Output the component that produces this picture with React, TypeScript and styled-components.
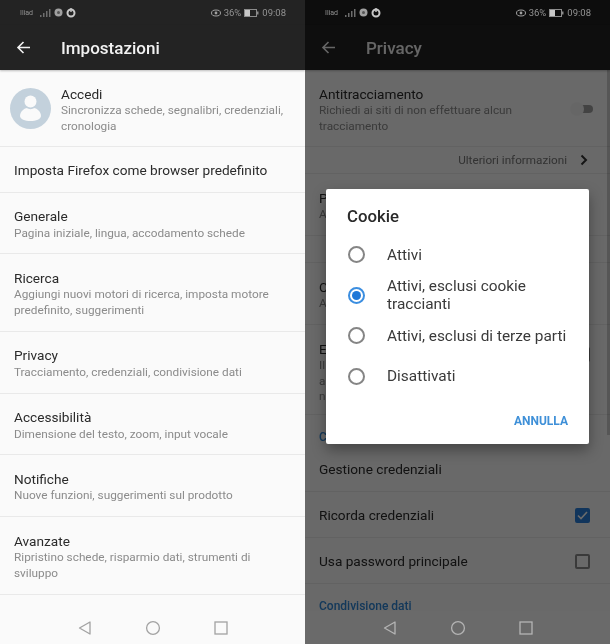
import React from 'react'
import styled, { createGlobalStyle } from 'styled-components'

const GlobalStyle = createGlobalStyle`
  html, body {
    margin: 0;
    padding: 0;
    background: #fafafa;
    font-family: Roboto, "Liberation Sans", sans-serif;
  }
`

const Page = styled.div`
  display: flex;
  width: 610px;
  height: 644px;
  overflow: hidden;
  filter: blur(0.6px);
`

const Phone = styled.div`
  position: relative;
  display: flex;
  flex-direction: column;
  width: 305px;
  height: 644px;
  overflow: hidden;
  background: #fafafa;
`

const StatusBar = styled.div<{ $dark?: boolean }>`
  display: flex;
  align-items: center;
  justify-content: space-between;
  height: 25px;
  flex: none;
  padding: 0 19px 0 20px;
  box-sizing: border-box;
  background: ${({ $dark }) => ($dark ? '#0d0d0d' : '#232323')};
  color: #929292;
  font-size: 9.5px;
`

const StatusGroup = styled.div`
  display: flex;
  align-items: center;
  gap: 3px;
`

const Carrier = styled.span`
  font-size: 7px;
  margin-right: 4px;
`

const Toolbar = styled.div`
  display: flex;
  align-items: center;
  height: 45px;
  flex: none;
  padding-left: 16px;
  background: #232323;
  color: #f2f2f2;
  font-size: 17px;
  font-weight: 500;
  box-shadow: 0 1px 2px rgba(0, 0, 0, 0.25);
  position: relative;
`

const BackIcon = styled.svg`
  width: 15px;
  height: 15px;
  margin-right: 30px;
`

const Content = styled.div`
  flex: 1;
  overflow: hidden;
`

const Row = styled.div`
  display: flex;
  align-items: flex-start;
  padding: 15.5px 14px 12.35px;
  border-bottom: 1px solid #e9e9e9;
`

const SingleRow = styled(Row)`
  align-items: center;
  padding: 15px 14px 12.5px;
`

const AccountRow = styled(Row)`
  padding-left: 10px;
  padding-bottom: 11.5px;
`

const TallRow = styled(Row)`
  padding-bottom: 9.85px;
`

const CheckRow = styled(SingleRow)`
  padding-right: 20px;
`

const Avatar = styled.svg`
  width: 41px;
  height: 41px;
  margin: 2px 10px 0 0;
  flex: none;
`

const RowText = styled.div`
  flex: 1;
  min-width: 0;
`

const Title = styled.div`
  font-size: 13.65px;
  line-height: 16px;
  margin-bottom: 1.5px;
  color: #2b2b2b;
`

const Sub = styled.div`
  font-size: 11.8px;
  line-height: 15.5px;
  color: #8b8b8b;
  white-space: nowrap;
`

const MoreRow = styled.div`
  display: flex;
  align-items: center;
  justify-content: flex-end;
  gap: 13px;
  height: 26px;
  padding-right: 22px;
  font-size: 11.7px;
  color: #777;
  border-bottom: 1px solid #e9e9e9;
`

const Chevron = styled.svg`
  width: 8px;
  height: 12px;
`

const Switch = styled.div`
  position: relative;
  width: 20px;
  height: 8px;
  margin: 19px 3px 0 0;
  border-radius: 4px;
  background: #a0a0a0;
  flex: none;

  &::before {
    content: '';
    position: absolute;
    left: -3px;
    top: -3px;
    width: 14px;
    height: 14px;
    border-radius: 50%;
    background: #f4f4f4;
  }
`

const Check = styled.div<{ $on?: boolean }>`
  display: flex;
  align-items: center;
  justify-content: center;
  width: 15px;
  height: 15px;
  box-sizing: border-box;
  flex: none;
  border-radius: 2px;
  border: 2px solid ${({ $on }) => ($on ? '#2a7fdb' : '#8a8a8a')};
  background: ${({ $on }) => ($on ? '#2a7fdb' : 'transparent')};
`

const RowCheck = styled(Check)`
  margin: 6px 6px 0 0;
`

const SectionHead = styled.div`
  padding: 15px 14px 0;
  height: 15.6px;
  font-size: 12px;
  font-weight: 500;
  line-height: 14px;
  color: #2f86d6;
`

const NavBar = styled.div<{ $dim?: boolean }>`
  display: flex;
  align-items: center;
  justify-content: center;
  gap: 52px;
  height: 33px;
  flex: none;
  background: ${({ $dim }) => ($dim ? '#6a6a6a' : '#fafafa')};
  color: ${({ $dim }) => ($dim ? '#b4b4b4' : '#a2a2a2')};
  position: relative;
  z-index: 2;
`

const NavIcon = styled.svg`
  width: 16px;
  height: 16px;
`

const Overlay = styled.div`
  position: absolute;
  top: 25px;
  left: 0;
  right: 0;
  bottom: 33px;
  background: rgba(0, 0, 0, 0.58);
  z-index: 1;
`

const Scrollbar = styled.div`
  position: absolute;
  top: 45px;
  right: 0;
  width: 3px;
  height: 365px;
  background: rgba(0, 0, 0, 0.18);
`

const Dialog = styled.div`
  position: absolute;
  left: 21px;
  top: 164px;
  width: 263px;
  height: 255px;
  box-sizing: border-box;
  padding: 17px 21px 0 21px;
  background: #fff;
  border-radius: 2px;
  box-shadow: 0 6px 14px rgba(0, 0, 0, 0.35);
`

const DialogTitle = styled.div`
  font-size: 16.8px;
  font-weight: 500;
  line-height: 20px;
  margin-bottom: 8.5px;
  color: #2a2a2a;
`

const Option = styled.div`
  display: flex;
  align-items: center;
  min-height: 40.5px;
  box-sizing: border-box;
`

const Radio = styled.div<{ $on?: boolean }>`
  display: flex;
  align-items: center;
  justify-content: center;
  width: 17px;
  height: 17px;
  box-sizing: border-box;
  margin: 0 22px 0 1px;
  flex: none;
  border-radius: 50%;
  border: 2px solid ${({ $on }) => ($on ? '#3b8ee0' : '#858585')};

  &::after {
    content: '';
    display: ${({ $on }) => ($on ? 'block' : 'none')};
    width: 9px;
    height: 9px;
    border-radius: 50%;
    background: #1f78d8;
  }
`

const OptionLabel = styled.div`
  font-size: 15.4px;
  line-height: 18px;
  color: #3a3a3a;
`

const DialogActions = styled.div`
  display: flex;
  justify-content: flex-end;
  margin-top: 16px;
`

const CancelButton = styled.div`
  font-size: 12px;
  font-weight: 700;
  line-height: 16px;
  color: #3f90d8;
`

function StatusIcons() {
  return (
    <StatusGroup>
      <Carrier>Iliad</Carrier>
      <svg width="11" height="8" viewBox="0 0 11 8">
        <path d="M0 8h1.5V6H0zM3 8h1.5V4H3zM6 8h1.5V2H6zM9 8h1.5V0H9z" fill="#6d6d6d" />
      </svg>
      <svg width="9" height="9" viewBox="0 0 9 9">
        <circle cx="4.500" cy="4.500" r="4" fill="#a0a0a0" />
        <circle cx="4.500" cy="4.500" r="1.500" fill="#555" />
      </svg>
      <svg width="10" height="10" viewBox="0 0 10 10">
        <circle cx="5" cy="5" r="3.500" fill="none" stroke="#c8c8c8" strokeWidth="2" />
        <path d="M5 0v4" stroke="#c8c8c8" strokeWidth="1.400" />
      </svg>
    </StatusGroup>
  )
}

function StatusRight() {
  return (
    <StatusGroup>
      <svg width="10" height="8" viewBox="0 0 10 8">
        <ellipse cx="5" cy="4" rx="4.500" ry="3" fill="none" stroke="#a0a0a0" strokeWidth="1" />
        <circle cx="5" cy="4" r="1.400" fill="#a0a0a0" />
      </svg>
      <span>36%</span>
      <svg width="15" height="8" viewBox="0 0 15 8">
        <rect x="0.5" y="0.5" width="12" height="7" fill="none" stroke="#8c8c8c" />
        <rect x="1" y="1" width="5" height="6" fill="#c8c8c8" />
        <rect x="13" y="2.500" width="1.500" height="3" fill="#8c8c8c" />
      </svg>
      <span>09:08</span>
    </StatusGroup>
  )
}

function BackArrow() {
  return (
    <BackIcon viewBox="0 0 15 15">
      <path d="M14 7.500H2M7.500 2 2 7.500 7.500 13" fill="none" stroke="currentColor" strokeWidth="1.600" />
    </BackIcon>
  )
}

function Nav({ dim }: { dim?: boolean }) {
  return (
    <NavBar $dim={dim}>
      <NavIcon viewBox="0 0 16 16">
        <path d="M13 2v12L2.500 8z" fill="none" stroke="currentColor" strokeWidth="1.300" strokeLinejoin="round" />
      </NavIcon>
      <NavIcon viewBox="0 0 16 16">
        <circle cx="8" cy="8" r="6.400" fill="none" stroke="currentColor" strokeWidth="1.300" />
      </NavIcon>
      <NavIcon viewBox="0 0 16 16">
        <rect x="2" y="2" width="12" height="12" fill="none" stroke="currentColor" strokeWidth="1.300" />
      </NavIcon>
    </NavBar>
  )
}

const settings = [
  { title: 'Generale', sub: ['Pagina iniziale, lingua, accodamento schede'] },
  { title: 'Ricerca', sub: ['Aggiungi nuovi motori di ricerca, imposta motore', 'predefinito, suggerimenti'] },
  { title: 'Privacy', sub: ['Tracciamento, credenziali, condivisione dati'] },
  { title: 'Accessibilità', sub: ['Dimensione del testo, zoom, input vocale'] },
  { title: 'Notifiche', sub: ['Nuove funzioni, suggerimenti sul prodotto'] },
  { title: 'Avanzate', sub: ['Ripristino schede, risparmio dati, strumenti di', 'sviluppo'] },
]

function SettingsPhone() {
  return (
    <Phone>
      <StatusBar>
        <StatusIcons />
        <StatusRight />
      </StatusBar>
      <Toolbar>
        <BackArrow />
        Impostazioni
      </Toolbar>
      <Content>
        <AccountRow>
          <Avatar viewBox="0 0 41 41">
            <circle cx="20.500" cy="20.500" r="20.500" fill="#c3d1dc" />
            <circle cx="20.500" cy="13.500" r="6" fill="#fafafa" />
            <path d="M10 28c0-5 5-8 7-8 1 1.500 6 1.500 7 0 2 0 7 3 7 8 0 3-5 5-10.500 5S10 31 10 28z" fill="#fafafa" />
          </Avatar>
          <RowText>
            <Title>Accedi</Title>
            <Sub>Sincronizza schede, segnalibri, credenziali,</Sub>
            <Sub>cronologia</Sub>
          </RowText>
        </AccountRow>
        <SingleRow>
          <Title>Imposta Firefox come browser predefinito</Title>
        </SingleRow>
        {settings.map((item) => (
          <Row key={item.title}>
            <RowText>
              <Title>{item.title}</Title>
              {item.sub.map((line) => (
                <Sub key={line}>{line}</Sub>
              ))}
            </RowText>
          </Row>
        ))}
      </Content>
      <Nav />
    </Phone>
  )
}

function MoreInfo() {
  return (
    <MoreRow>
      Ulteriori informazioni
      <Chevron viewBox="0 0 8 12">
        <path d="M1.500 1.500 6 6l-4.500 4.500" fill="none" stroke="#333" strokeWidth="2" />
      </Chevron>
    </MoreRow>
  )
}

const cookieOptions = [
  { label: 'Attivi' },
  { label: 'Attivi, esclusi cookie traccianti', on: true },
  { label: 'Attivi, esclusi di terze parti' },
  { label: 'Disattivati' },
]

function PrivacyPhone() {
  return (
    <Phone>
      <StatusBar $dark>
        <StatusIcons />
        <StatusRight />
      </StatusBar>
      <Toolbar>
        <BackArrow />
        Privacy
      </Toolbar>
      <Content>
        <Row>
          <RowText>
            <Title>Antitracciamento</Title>
            <Sub>Richiedi ai siti di non effettuare alcun</Sub>
            <Sub>tracciamento</Sub>
          </RowText>
          <Switch />
        </Row>
        <MoreInfo />
        <Row>
          <RowText>
            <Title>Protezione</Title>
            <Sub>Attiva</Sub>
          </RowText>
        </Row>
        <MoreInfo />
        <Row>
          <RowText>
            <Title>Cookie</Title>
            <Sub>Attivi</Sub>
          </RowText>
        </Row>
        <TallRow>
          <RowText>
            <Title>Elimina dati</Title>
            <Sub>Il</Sub>
            <Sub>al</Sub>
            <Sub>ne</Sub>
          </RowText>
          <RowCheck />
        </TallRow>
        <SectionHead>Credenziali</SectionHead>
        <SingleRow>
          <Title>Gestione credenziali</Title>
        </SingleRow>
        <CheckRow>
          <RowText>
            <Title>Ricorda credenziali</Title>
          </RowText>
          <Check $on>
            <svg width="11" height="9" viewBox="0 0 11 9">
              <path d="M1 4.500 4 7.500 10 1" fill="none" stroke="#fff" strokeWidth="1.600" />
            </svg>
          </Check>
        </CheckRow>
        <CheckRow>
          <RowText>
            <Title>Usa password principale</Title>
          </RowText>
          <Check />
        </CheckRow>
        <SectionHead>Condivisione dati</SectionHead>
      </Content>
      <Overlay>
        <Scrollbar />
        <Dialog>
          <DialogTitle>Cookie</DialogTitle>
          {cookieOptions.map((option) => (
            <Option key={option.label}>
              <Radio $on={option.on} />
              <OptionLabel>{option.label}</OptionLabel>
            </Option>
          ))}
          <DialogActions>
            <CancelButton>ANNULLA</CancelButton>
          </DialogActions>
        </Dialog>
      </Overlay>
      <Nav dim />
    </Phone>
  )
}

export default function App() {
  return (
    <>
      <GlobalStyle />
      <Page>
        <SettingsPhone />
        <PrivacyPhone />
      </Page>
    </>
  )
}
